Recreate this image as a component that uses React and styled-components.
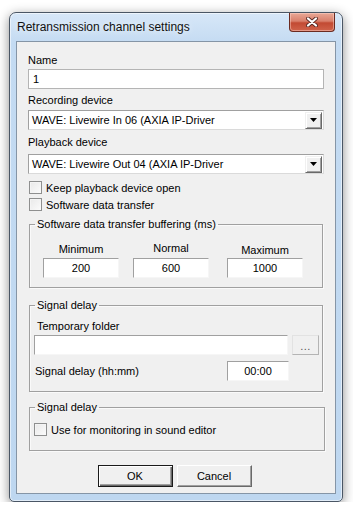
import React from "react";
import styled, { createGlobalStyle } from "styled-components";

const GlobalStyle = createGlobalStyle`
  html, body {
    margin: 0;
    background: #ffffff;
  }
  body {
    font-family: "Liberation Sans", Arial, sans-serif;
    font-size: 11px;
    color: #000;
  }
  * { box-sizing: border-box; }
`;

const Window = styled.div`
  width: 334px;
  height: 490px;
  margin: 12px 0 0 9px;
  display: flex;
  flex-direction: column;
  padding: 0 6px 7px 6px;
  border: 1px solid #4a5665;
  border-radius: 7px 7px 5px 5px;
  background: linear-gradient(180deg, #d7e7f8 0%, #c4dbf2 30px, #bed7f0 100%);
  box-shadow: 0 3px 12px rgba(0, 0, 0, 0.45), inset 0 0 0 1px rgba(255, 255, 255, 0.55);
`;

const TitleBar = styled.div`
  height: 28px;
  display: flex;
  justify-content: space-between;
  align-items: flex-start;
`;

const Title = styled.div`
  padding: 7px 0 0 1px;
  font-size: 12px;
  line-height: 14px;
  color: #111;
  text-shadow: 0 0 6px rgba(255, 255, 255, 0.9);
`;

const CloseButton = styled.div`
  width: 46px;
  height: 19px;
  margin-right: 1px;
  display: flex;
  align-items: center;
  justify-content: center;
  border: 1px solid #6b2a20;
  border-top: none;
  border-radius: 0 0 4px 4px;
  background: linear-gradient(180deg, #e9a896 0%, #d9806c 45%, #c24a33 55%, #d0634b 100%);
  box-shadow: inset 0 0 0 1px rgba(255, 220, 210, 0.45);
`;

const Client = styled.div`
  flex: 1;
  display: flex;
  flex-direction: column;
  padding: 12px 11px 0 11px;
  background: #f0f0f0;
  border: 1px solid #8595a6;
`;

const Field = styled.div`
  display: flex;
  flex-direction: column;
  margin-top: ${(p) => p.$mt || 0}px;
`;

const Label = styled.div`
  line-height: 13px;
  margin-bottom: ${(p) => p.$gap ?? 2}px;
  padding-left: ${(p) => p.$indent || 0}px;
`;

const TextBox = styled.div`
  height: ${(p) => p.$h || 20}px;
  width: ${(p) => (p.$w ? `${p.$w}px` : "auto")};
  margin-right: ${(p) => p.$mr || 0}px;
  display: flex;
  align-items: center;
  justify-content: ${(p) => (p.$center ? "center" : "flex-start")};
  padding: 0 4px;
  background: #fff;
  border: 1px solid #b4b4b4;
  border-top-color: ${(p) => (p.$sunken ? "#a0a0a0" : "#b4b4b4")};
  border-left-color: ${(p) => (p.$sunken ? "#a0a0a0" : "#b4b4b4")};
  border-right-color: ${(p) => (p.$sunken ? "#f6f6f6" : "#b4b4b4")};
  border-bottom-color: ${(p) => (p.$sunken ? "#f6f6f6" : "#b4b4b4")};
  white-space: nowrap;
`;

const Combo = styled.div`
  height: 20px;
  display: flex;
  align-items: center;
  padding: 0 1px 0 3px;
  background: #fff;
  border: 1px solid #a0a0a0;
  border-right-color: #dadada;
  border-bottom-color: #dadada;
  white-space: nowrap;
`;

const ComboText = styled.span`
  flex: 1;
`;

const ArrowButton = styled.div`
  width: 17px;
  height: 17px;
  display: flex;
  align-items: center;
  justify-content: center;
  background: #f0f0f0;
  border: 1px solid;
  border-color: #f0f0f0 #696969 #696969 #f0f0f0;
  box-shadow: inset 1px 1px 0 #fff, inset -1px -1px 0 #a0a0a0;
`;

const CheckList = styled.div`
  display: flex;
  flex-direction: column;
  margin-top: ${(p) => p.$mt || 0}px;
  padding-left: ${(p) => p.$indent || 1}px;
`;

const CheckRow = styled.div`
  height: 17px;
  display: flex;
  align-items: center;
  gap: 4px;
`;

const Box = styled.span`
  width: 13px;
  height: 13px;
  background: linear-gradient(135deg, #e9e9e9 0%, #fbfbfb 100%);
  border: 1px solid #8e8f8f;
  box-shadow: inset 1px 1px 0 #f4f4f4;
`;

const Group = styled.fieldset`
  margin: ${(p) => p.$mt}px ${(p) => p.$mr ?? 1}px 0 1px;
  padding: 0;
  min-width: 0;
  border: 1px solid #a0a0a0;
  box-shadow: inset 1px 1px 0 #fafafa, 1px 1px 0 #fafafa;
`;

const Legend = styled.legend`
  margin-left: 5px;
  padding: 0 2px;
  line-height: 13px;
`;

const BufferRow = styled.div`
  display: flex;
  padding: 12px 0 9px 13px;
`;

const BufferCol = styled.div`
  width: 76px;
  margin-left: ${(p) => p.$ml || 0}px;
  display: flex;
  flex-direction: column;
  align-items: center;
`;

const BufferLabel = styled.div`
  line-height: 13px;
  margin-top: ${(p) => p.$dy}px;
  margin-bottom: ${(p) => 2 - p.$dy}px;
`;

const DelayBody = styled.div`
  display: flex;
  flex-direction: column;
  padding: 8px 3px 10px 4px;
`;

const FolderRow = styled.div`
  display: flex;
  gap: 4px;
`;

const BrowseButton = styled.div`
  width: 27px;
  height: 20px;
  display: flex;
  align-items: flex-end;
  justify-content: center;
  padding-bottom: 3px;
  background: #f0f0f0;
  border: 1px solid #b4b4b4;
  border-top-color: #e2e2e2;
  border-left-color: #e2e2e2;
  color: #555;
  letter-spacing: 0.5px;
  line-height: 10px;
`;

const DelayRow = styled.div`
  display: flex;
  align-items: center;
  margin-top: 6px;
  padding-left: 1px;
`;

const DelayLabel = styled.span`
  flex: 1;
`;

const MonitorBody = styled.div`
  padding: 7px 0 12px 4px;
`;

const ButtonRow = styled.div`
  display: flex;
  justify-content: center;
  gap: 4px;
  margin-top: 14px;
  padding-right: 3px;
`;

const Button = styled.div`
  width: 75px;
  height: 22px;
  display: flex;
  align-items: center;
  justify-content: center;
  background: #f0f0f0;
  border: 1px solid;
  border-color: ${(p) => (p.$default ? "#1a1a1a" : "#ffffff #696969 #696969 #ffffff")};
  box-shadow: ${(p) =>
    p.$default
      ? "inset 1px 1px 0 #fff, inset -1px -1px 0 #696969, inset -2px -2px 0 #a0a0a0"
      : "inset -1px -1px 0 #a0a0a0"};
`;

const CloseGlyph = () => (
  <svg width="12" height="10" viewBox="0 0 12 10">
    <path d="M2 1.5 L10 8.5 M10 1.5 L2 8.5" stroke="#5a2a24" strokeWidth="4" strokeLinecap="round" />
    <path d="M2 1.5 L10 8.5 M10 1.5 L2 8.5" stroke="#ffffff" strokeWidth="2.2" strokeLinecap="round" />
  </svg>
);

const DownArrow = () => (
  <svg width="7" height="4" viewBox="0 0 7 4">
    <path d="M0 0 H7 L3.5 4 Z" fill="#000" />
  </svg>
);

const Checkbox = ({ label }) => (
  <CheckRow>
    <Box />
    <span>{label}</span>
  </CheckRow>
);

const buffers = [
  { label: "Minimum", value: "200", ml: 0, dy: 0 },
  { label: "Normal", value: "600", ml: 14, dy: -1 },
  { label: "Maximum", value: "1000", ml: 18, dy: 1 },
];

export default function App() {
  return (
    <>
      <GlobalStyle />
      <Window>
        <TitleBar>
          <Title>Retransmission channel settings</Title>
          <CloseButton>
            <CloseGlyph />
          </CloseButton>
        </TitleBar>
        <Client>
          <Field>
            <Label>Name</Label>
            <TextBox>1</TextBox>
          </Field>
          <Field $mt={5}>
            <Label $gap={3}>Recording device</Label>
            <Combo>
              <ComboText>WAVE: Livewire In 06 (AXIA IP-Driver</ComboText>
              <ArrowButton>
                <DownArrow />
              </ArrowButton>
            </Combo>
          </Field>
          <Field $mt={6}>
            <Label $gap={5}>Playback device</Label>
            <Combo>
              <ComboText>WAVE: Livewire Out 04 (AXIA IP-Driver</ComboText>
              <ArrowButton>
                <DownArrow />
              </ArrowButton>
            </Combo>
          </Field>
          <CheckList $mt={5}>
            <Checkbox label="Keep playback device open" />
            <Checkbox label="Software data transfer" />
          </CheckList>

          <Group $mt={5}>
            <Legend>Software data transfer buffering (ms)</Legend>
            <BufferRow>
              {buffers.map((b) => (
                <BufferCol key={b.label} $ml={b.ml}>
                  <BufferLabel $dy={b.dy}>{b.label}</BufferLabel>
                  <TextBox $w={76} $h={20} $center $sunken>
                    {b.value}
                  </TextBox>
                </BufferCol>
              ))}
            </BufferRow>
          </Group>

          <Group $mt={11}>
            <Legend>Signal delay</Legend>
            <DelayBody>
              <Label $indent={3}>Temporary folder</Label>
              <FolderRow>
                <TextBox $w={254} $sunken />
                <BrowseButton>...</BrowseButton>
              </FolderRow>
              <DelayRow>
                <DelayLabel>Signal delay (hh:mm)</DelayLabel>
                <TextBox $w={62} $mr={30} $center $sunken>
                  00:00
                </TextBox>
              </DelayRow>
            </DelayBody>
          </Group>

          <Group $mt={9} $mr={-1}>
            <Legend>Signal delay</Legend>
            <MonitorBody>
              <Checkbox label="Use for monitoring in sound editor" />
            </MonitorBody>
          </Group>

          <ButtonRow>
            <Button $default>OK</Button>
            <Button>Cancel</Button>
          </ButtonRow>
        </Client>
      </Window>
    </>
  );
}
